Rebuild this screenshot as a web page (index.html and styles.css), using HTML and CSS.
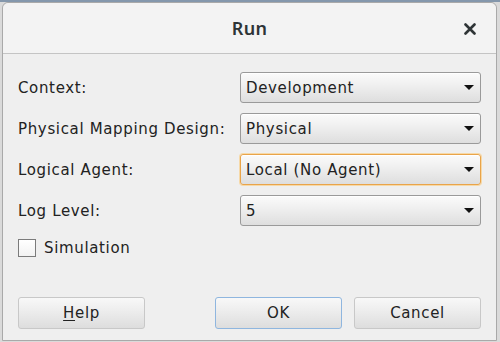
FILE: index.html
```html
<!DOCTYPE html>
<html>
<head>
<meta charset="utf-8">
<link rel="stylesheet" href="styles.css">
</head>
<body>
<div class="desktop">
  <div class="dialog">
    <div class="titlebar">
      <span class="title">Run</span>
      <span class="close">
        <svg width="12" height="12" viewBox="0 0 12 12"><path d="M1.5 1.5 L10.5 10.5 M10.5 1.5 L1.5 10.5" stroke="#2e3436" stroke-width="2.6" stroke-linecap="round"/></svg>
      </span>
    </div>
    <div class="content">
      <div class="form">
        <div class="label">Context:</div>
        <div class="combo"><span>Development</span><i class="arrow"></i></div>
        <div class="label">Physical Mapping Design:</div>
        <div class="combo"><span>Physical</span><i class="arrow"></i></div>
        <div class="label">Logical Agent:</div>
        <div class="combo focus"><span>Local (No Agent)</span><i class="arrow"></i></div>
        <div class="label">Log Level:</div>
        <div class="combo"><span>5</span><i class="arrow"></i></div>
      </div>
      <div class="check"><span class="box"></span><span>Simulation</span></div>
      <div class="buttons">
        <div class="btn"><u>H</u>elp</div>
        <div class="spacer"></div>
        <div class="btn default">OK</div>
        <div class="btn">Cancel</div>
      </div>
    </div>
  </div>
</div>
</body>
</html>
```
FILE: styles.css
```css
html, body { margin: 0; padding: 0; }
body {
  width: 500px; height: 342px; overflow: hidden;
  background: #d9d9d9;
  font-family: "DejaVu Sans", sans-serif;
  font-size: 15px;
  letter-spacing: 0.65px;
  color: #222222;
}
.desktop {
  width: 500px; height: 342px;
  padding: 2px 3px 0 2px;
  box-sizing: border-box;
  background: linear-gradient(#8497ac 0 2px, #dadada 2px);
}
.dialog {
  height: 339px;
  box-sizing: border-box;
  border: 1px solid #a9a9a9;
  border-radius: 6px 6px 0 0;
  background: #efefef;
  display: flex; flex-direction: column;
}
.titlebar {
  height: 51px;
  flex: none;
  box-sizing: border-box;
  background: #f3f3f3;
  border-bottom: 1px solid #c4c4c4;
  border-radius: 6px 6px 0 0;
  display: flex; align-items: center; justify-content: center;
  position: relative;
}
.title {
  font-family: "Noto Sans", sans-serif;
  font-weight: 600;
  font-size: 18px;
  letter-spacing: 0.3px;
  color: #2e3436;
}
.close {
  position: absolute;
  right: 20px; top: 20px;
  width: 12px; height: 12px;
  display: flex;
}
.content {
  padding: 18px 15px 0 14px;
  flex: 1;
  display: flex; flex-direction: column;
}
.form {
  display: grid;
  grid-template-columns: 223px 1fr;
  row-gap: 10px;
  align-items: center;
}
.label { padding-left: 1px; }
.combo {
  height: 31px;
  box-sizing: border-box;
  border: 1px solid #9a9a9a;
  border-radius: 3px;
  background: linear-gradient(#fbfbfb, #f0f0f0 40%, #dedede);
  display: flex; align-items: center;
  padding: 0 5px 0 5px;
  box-shadow: inset 0 1px 0 #ffffff;
}
.combo span { flex: 1; }
.combo.focus {
  border-color: #e9a44a;
  box-shadow: 0 0 0 1px #f6d9a8, inset 0 1px 0 #ffffff;
}
.arrow {
  width: 0; height: 0;
  border-left: 5px solid transparent;
  border-right: 5px solid transparent;
  border-top: 5px solid #111;
  margin-right: 1px;
}
.check {
  margin-top: 13px;
  display: flex; align-items: center; gap: 8px;
  padding-left: 1px;
}
.box {
  width: 18px; height: 18px;
  box-sizing: border-box;
  border: 1px solid #7b7b7b;
  background: linear-gradient(#ffffff, #f2f2f2);
}
.buttons {
  margin-top: 40px;
  display: flex; gap: 12px;
  padding-left: 1px;
}
.spacer { flex: 1; }
.btn {
  width: 127px; height: 32px;
  box-sizing: border-box;
  border: 1px solid #c8c8c8;
  border-radius: 3px;
  background: linear-gradient(#f8f8f8, #ebebeb 50%, #dddddd);
  display: flex; align-items: center; justify-content: center;
}
.btn u { text-decoration: underline; text-underline-offset: 2px; }
.btn.default { border-color: #8fb6df; }
```
